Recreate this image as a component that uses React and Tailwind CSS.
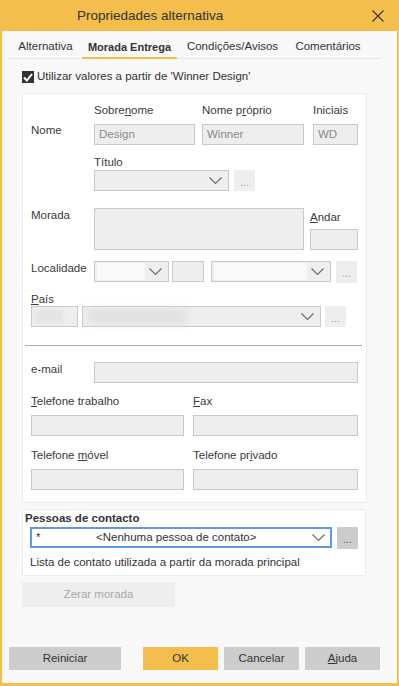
import React from 'react';

const font = { fontFamily: '"Liberation Sans", Arial, sans-serif' };

function Chevron() {
    return (
        <svg width="13" height="8" viewBox="0 0 13 8" className="shrink-0">
            <polyline points="0.5,0.5 6.5,6.5 12.5,0.5" fill="none" stroke="#6b6b6b" strokeWidth="1.2" />
        </svg>
    );
}

function Input({ className = '', children }) {
    return (
        <div className={`h-[21px] border border-[#c9c9c9] bg-[#eeeeee] flex items-center px-[4px] text-[#8a8a8a] ${className}`}>
            {children}
        </div>
    );
}

function Select({ className = '', inner = false, blur = false }) {
    return (
        <div className={`h-[21px] border border-[#c9c9c9] bg-[#eeeeee] flex items-center pl-[2px] pr-[6px] ${className}`}>
            <div className="flex-1 h-full py-[1px] pr-[4px]">
                {inner && <div className="h-full bg-[#f9f9f9]" />}
                {blur && <div className="h-full w-[100px] ml-[2px] bg-[#e2e2e2] blur-[3px] rounded-full" />}
            </div>
            <Chevron />
        </div>
    );
}

function Dots({ className = '', dark = false }) {
    return (
        <div className={`w-[21px] flex items-center justify-center text-[10px] leading-none pt-[4px] ${dark ? 'bg-[#cccccc] text-[#555]' : 'bg-[#eeeeee] text-[#999]'} ${className}`}>
            ...
        </div>
    );
}

function Label({ children, className = '' }) {
    return <div className={`h-[14px] leading-[14px] text-[11.5px] text-[#3a3a3a] whitespace-nowrap ${className}`}>{children}</div>;
}

export default function App() {
    return (
        <div className="w-[399px] h-[686px] bg-[#f4be4c] flex flex-col" style={font}>
            <div className="h-[31px] shrink-0 flex items-center justify-between pl-[77px] pr-[15px]">
                <span className="text-[13.5px] text-[#333] pt-[1px]">Propriedades alternativa</span>
                <svg width="12" height="12" viewBox="0 0 12 12">
                    <path d="M0.5 0.5 L11.5 11.5 M11.5 0.5 L0.5 11.5" stroke="#333" strokeWidth="1.1" />
                </svg>
            </div>

            <div className="flex-1 mx-[2px] mb-[3px] bg-[#f8f8f8] flex flex-col">
                {/* tabs */}
                <div className="ml-[7px] w-[372px] h-[28px] border-b border-[#e6e6e6] flex items-end text-[11.5px] text-[#333] whitespace-nowrap">
                    <div className="w-[73px] h-[28px] flex items-center justify-center pt-[5px]">Alternativa</div>
                    <div className="w-[95px] h-[28px] flex items-center justify-center text-[11px] font-bold border-b-2 border-[#f4be4c] mb-[-1px] pt-[6px]">Morada Entrega</div>
                    <div className="w-[103px] h-[28px] ml-[4px] flex items-center justify-center pt-[5px]">Condições/Avisos</div>
                    <div className="w-[82px] h-[28px] ml-[3px] flex items-center justify-center pt-[5px]">Comentários</div>
                </div>

                <div className="flex items-center ml-[20px] mt-[12px] h-[12px]">
                    <div className="w-[12px] h-[12px] bg-[#333] flex items-center justify-center">
                        <svg width="10" height="9" viewBox="0 0 10 9">
                            <polyline points="1,4.5 3.8,7.5 9,1" fill="none" stroke="#fff" strokeWidth="2" />
                        </svg>
                    </div>
                    <span className="ml-[3px] text-[11.5px] text-[#333]">Utilizar valores a partir de 'Winner Design'</span>
                </div>

                {/* address panel */}
                <div className="ml-[20px] mt-[10px] w-[345px] bg-white border border-[#ececec] pb-[12px]">
                    <div className="flex pl-[8px] pt-[9px]">
                        <Label className="w-[63px] mt-[20px]">Nome</Label>
                        <div className="w-[101px]">
                            <Label>Sobre<u>n</u>ome</Label>
                            <Input className="mt-[7px] text-[11.5px]">Design</Input>
                        </div>
                        <div className="w-[102px] ml-[7px]">
                            <Label>Nome p<u>r</u>óprio</Label>
                            <Input className="mt-[7px] text-[11.5px]">Winner</Input>
                        </div>
                        <div className="w-[45px] ml-[9px]">
                            <Label>Iniciais</Label>
                            <Input className="mt-[7px] text-[11.5px]">WD</Input>
                        </div>
                    </div>

                    <div className="pl-[71px] mt-[10px]">
                        <Label>Título</Label>
                        <div className="flex mt-[1px]">
                            <Select className="w-[135px]" />
                            <Dots className="ml-[5px] h-[21px]" />
                        </div>
                    </div>

                    <div className="flex pl-[8px] mt-[17px]">
                        <Label className="w-[63px]">Morada</Label>
                        <div className="w-[210px] h-[42px] border border-[#c9c9c9] bg-[#eeeeee]" />
                        <div className="w-[48px] ml-[6px] pt-[2px]">
                            <Label><u>A</u>ndar</Label>
                            <Input className="mt-[5px]" />
                        </div>
                    </div>

                    <div className="flex items-start pl-[8px] mt-[11px]">
                        <Label className="w-[63px]">Localidade</Label>
                        <Select className="w-[75px]" inner />
                        <Input className="w-[32px] ml-[3px]" />
                        <Select className="w-[120px] ml-[7px]" inner />
                        <Dots className="ml-[5px] h-[22px]" />
                    </div>

                    <div className="pl-[8px] mt-[9px]">
                        <Label><u>P</u>aís</Label>
                        <div className="flex">
                            <div className="w-[47px] h-[21px] border border-[#c9c9c9] bg-[#eeeeee] p-[3px]">
                                <div className="h-full w-[28px] bg-[#e4e4e4] blur-[2px]" />
                            </div>
                            <Select className="w-[239px] ml-[4px]" blur />
                            <Dots className="ml-[4px] h-[21px]" />
                        </div>
                    </div>

                    <div className="ml-[2px] mt-[18px] w-[337px] h-[1px] bg-[#a9a9a9]" />

                    <div className="flex pl-[8px] mt-[16px]">
                        <Label className="w-[63px]">e-mail</Label>
                        <Input className="w-[264px]" />
                    </div>

                    <div className="flex pl-[8px] mt-[11px]">
                        <div className="w-[153px]">
                            <Label><u>T</u>elefone trabalho</Label>
                            <Input className="mt-[7px]" />
                        </div>
                        <div className="w-[165px] ml-[9px]">
                            <Label><u>F</u>ax</Label>
                            <Input className="mt-[7px]" />
                        </div>
                    </div>

                    <div className="flex pl-[8px] mt-[12px]">
                        <div className="w-[153px]">
                            <Label>Telefone <u>m</u>óvel</Label>
                            <Input className="mt-[7px]" />
                        </div>
                        <div className="w-[165px] ml-[9px]">
                            <Label>Telefone pr<u>i</u>vado</Label>
                            <Input className="mt-[7px]" />
                        </div>
                    </div>
                </div>

                {/* contact panel */}
                <div className="ml-[20px] mt-[6px] w-[344px] bg-white border border-[#ececec] pb-[6px]">
                    <Label className="ml-[2px] mt-[1px] font-bold text-[#333]">Pessoas de contacto</Label>
                    <div className="flex ml-[7px] mt-[2px]">
                        <div className="w-[302px] h-[21px] border-2 border-[#5c9ae3] bg-white flex items-center pl-[4px] pr-[5px] text-[11.5px] text-[#333]">
                            <span>*</span>
                            <span className="flex-1 text-center">&lt;Nenhuma pessoa de contato&gt;</span>
                            <Chevron />
                        </div>
                        <Dots dark className="ml-[5px] h-[22px]" />
                    </div>
                    <Label className="ml-[7px] mt-[6px] text-[#333]">Lista de contato utilizada a partir da morada principal</Label>
                </div>

                <div className="ml-[20px] mt-[6px] w-[153px] h-[25px] bg-[#eeeeee] flex items-center justify-center text-[11.5px] text-[#a8a8a8]">
                    Zerar morada
                </div>

                <div className="flex-1" />

                <div className="flex ml-[7px] mb-[13px] text-[11.5px] text-[#333]">
                    <div className="w-[112px] h-[23px] bg-[#cccccc] flex items-center justify-center">Reiniciar</div>
                    <div className="w-[75px] h-[23px] ml-[22px] bg-[#f4be4c] flex items-center justify-center">OK</div>
                    <div className="w-[75px] h-[23px] ml-[6px] bg-[#cccccc] flex items-center justify-center">Cancelar</div>
                    <div className="w-[75px] h-[23px] ml-[6px] bg-[#cccccc] flex items-center justify-center"><span><u>A</u>juda</span></div>
                </div>
            </div>
        </div>
    );
}
